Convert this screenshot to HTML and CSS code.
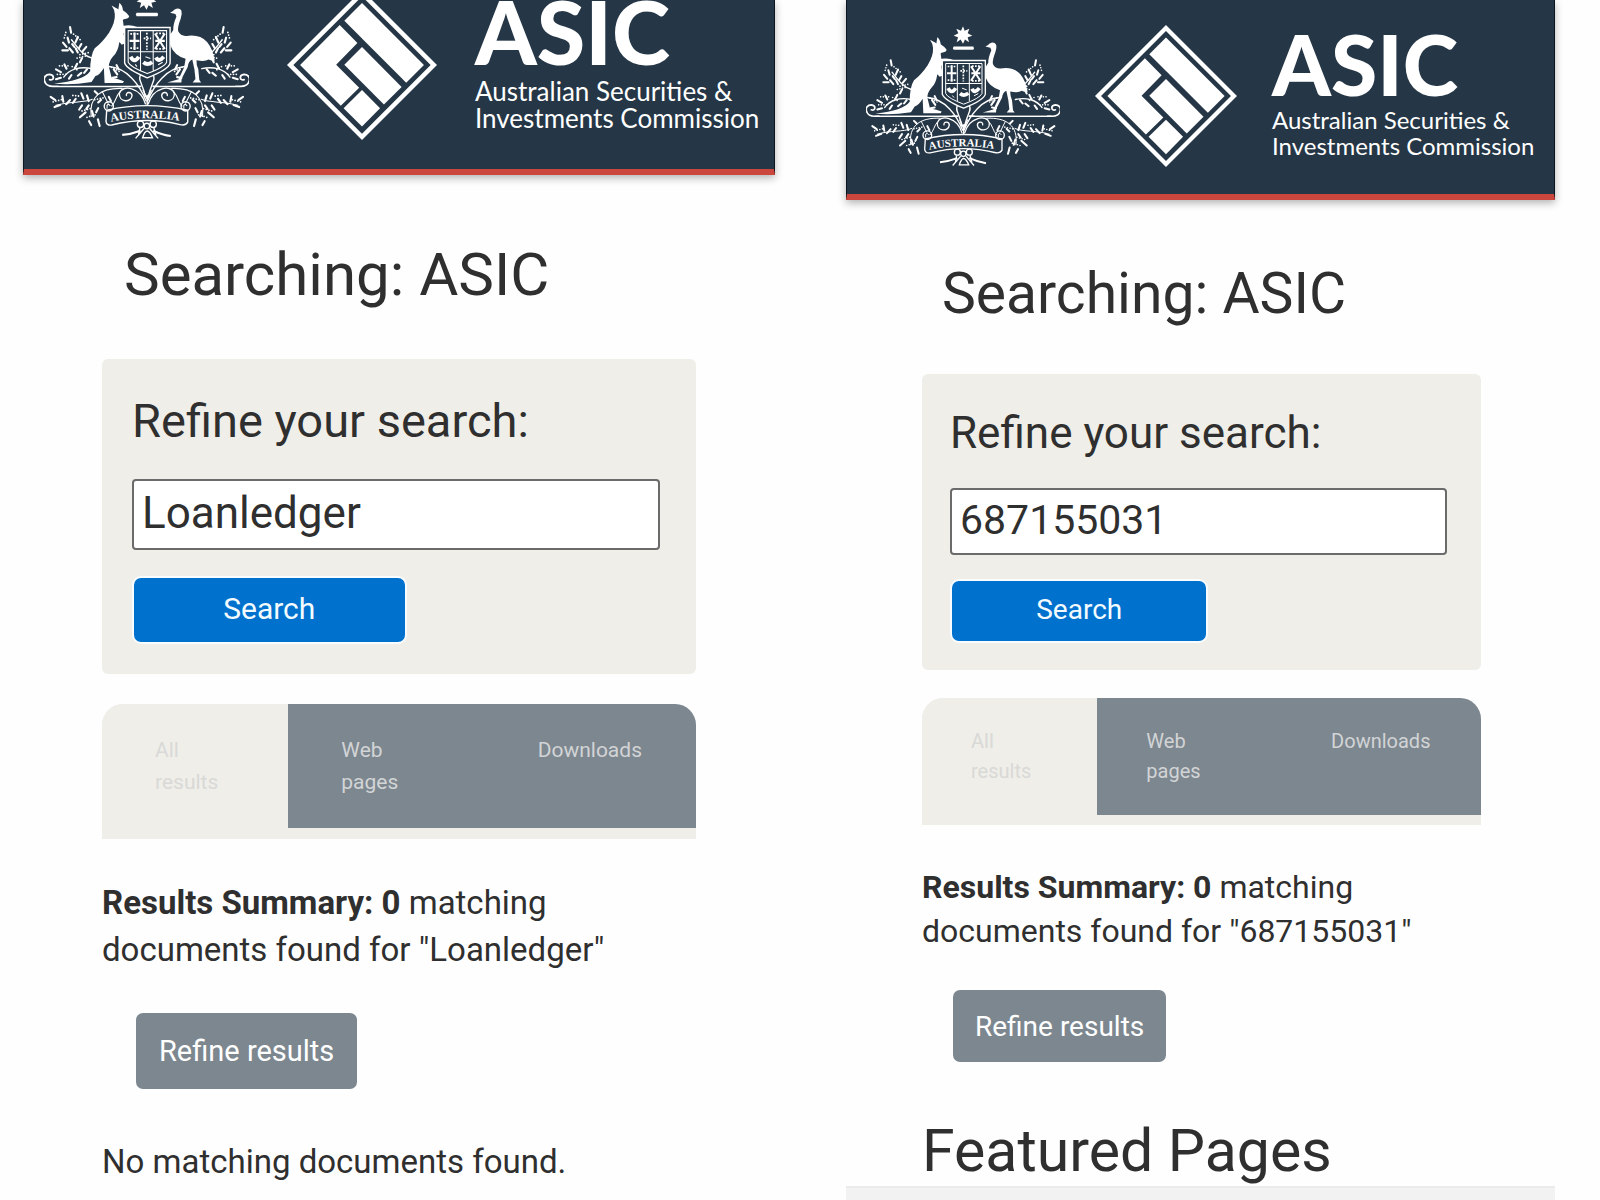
FILE: index.html
```
<!DOCTYPE html>
<html lang="en">
<head>
    <meta charset="UTF-8">
    <meta name="viewport" content="width=device-width, initial-scale=1.0">
    <title>ASIC search</title>
    <link rel="stylesheet" href="styles.css">
</head>
<body>
    <!-- shared logo artwork -->
    <svg class="defs" aria-hidden="true">
        <defs>
            <path id="ribbon-line" d="M268 449 Q370 428 478 449"/>
            <!-- one half of the foliage, mirrored for the other side -->
            <g id="foliage" fill="none" stroke="#fff" stroke-linecap="round">
                <path stroke-width="5" d="M352 348 H108 C74 352 70 314 94 314 C110 316 106 334 94 329"/>
                <path stroke-width="2" stroke="#253646" d="M335 345 H120"/>
                <path stroke-width="4" d="M368 390 C350 345 315 296 262 292 M366 376 C355 335 345 330 352 316 M214 298 C180 290 150 300 134 322 M214 268 C190 262 175 240 156 216"/>
                <path stroke-width="4" d="M366 398 C352 350 300 342 292 368 C290 394 326 396 328 374 C326 362 310 364 312 374"/>
                <path stroke-width="3" d="M300 354 C240 352 205 376 212 434 M215 385 C190 396 150 390 112 402 M292 366 C282 376 282 392 270 404 M244 364 L260 396"/>
                <path stroke-width="6" d="M152 180 L155 196 M174 208 L167 224 M145 210 L149 224 M132 224 L142 236 M130 246 L146 246 M150 240 L160 252 M184 228 L177 240 M198 236 L188 248 M168 240 L174 252 M158 228 L164 236"/>
                <path stroke-width="6" d="M112 300 L126 308 M136 286 L142 298 M112 328 L126 324 M156 316 L149 326 M172 284 L166 296 M186 268 L180 280 M184 310 L174 318 M200 300 L192 310 M276 300 L286 314 M284 288 L290 300 M272 324 L284 322"/>
                <path stroke-width="6" d="M97 378 L110 387 M130 376 L133 392 M108 407 L124 401 M152 387 L141 399 M184 368 L190 383 M168 384 L160 395 M186 402 L178 414 M200 374 L205 390 M180 436 L196 422 M205 402 L198 412 M214 418 L219 434 M231 442 L236 461 M206 447 L212 458 M232 410 L226 422 M240 386 L232 394 M222 362 L230 370 M262 378 L268 390"/>
                <path stroke-width="5" stroke-dasharray="0 8" d="M140 195 L134 216 M162 200 L186 220 M122 290 L152 290 M116 314 L144 314 M158 292 L176 304 M180 258 L206 252 M172 268 L196 262 M104 392 L128 386 M160 374 L180 376 M186 418 L214 410 M200 436 L226 428 M222 386 L250 380 M270 294 L292 306"/>
            </g>
            <symbol id="crest" viewBox="78 78 582 422">
                <use href="#foliage"/>
                <use href="#foliage" transform="translate(740) scale(-1 1)"/>
                <g fill="#fff">
                    <path d="M369 78 L374 92 L388 86 L383 99 L397 107 L383 111 L387 126 L375 118 L369 131 L362 118 L350 126 L354 111 L341 107 L355 99 L349 86 L363 92Z"/>
                    <path d="M341 139 H400 Q404 144 400 149 H341 Q336 144 341 139Z"/>
                    <path d="M270 119 L281 125 Q286 127 289 130 L292 111 Q301 118 302 132 Q311 137 320 149 Q319 156 311 156 Q303 157 302 160 L304 176 Q326 172 342 180 L339 188 L310 188 L304 198 L308 226 L299 230 L292 222 Q288 250 275 262 Q262 277 262 292 L270 324 Q290 328 305 334 L302 339 H250 L248 296 Q236 316 224 319 L213 336 Q150 346 106 340 Q190 332 209 305 Q209 260 222 240 Q245 222 263 195 Q281 166 279 143 Q279 132 270 119Z"/>
                    <path d="M436 139 Q444 136 449 130 Q462 123 468 133 Q471 142 466 156 Q456 182 459 192 Q466 206 482 205 Q520 199 541 222 Q556 240 563 275 Q552 276 545 272 Q535 279 511 274 Q510 287 516 300 L519 330 L524 337 H500 L508 327 L505 300 L499 272 Q488 276 486 293 L469 326 L468 337 H428 L460 328 L476 294 L480 270 Q447 260 437 232 L431 205 Q440 198 445 188 Q444 174 454 150 L451 143Z"/>
                </g>
                <path d="M307 181 H436 V282 Q432 300 371 324 Q313 300 307 282Z" fill="#253646" stroke="#fff" stroke-width="4"/>
                <g fill="none" stroke="#fff" stroke-width="3">
                    <path d="M317 190 H426 V280 Q420 294 371 312 Q323 294 317 280Z M352 190 V250 M388 190 V250 M317 250 H426 M352 250 V303 M388 250 V303"/>
                    <path stroke-width="6" d="M335 195 V245 M321 219 H349 M393 198 L421 242 M421 198 L393 242 M394 219 H421"/>
                    <path stroke-width="5" stroke-dasharray="5 4" d="M323 199 H348 M323 240 H348 M370 196 V244 M361 212 H382 M396 198 H421 M396 242 H421"/>
                    <path stroke-width="11" d="M324 264 Q335 284 347 264 M360 280 Q372 290 385 279 M396 266 Q403 282 418 264"/>
                    <path stroke-width="3" d="M337 286 L342 292 M366 264 L380 269 M402 287 L415 280"/>
                </g>
                <!-- ribbon -->
                <path d="M256 416 Q370 390 486 416 V450 Q480 461 464 457 Q370 433 270 458 Q255 460 254 447Z" fill="#253646" stroke="#fff" stroke-width="4"/>
                <g fill="none" stroke="#fff" stroke-width="4">
                    <circle cx="262" cy="405" r="13"/>
                    <circle cx="480" cy="405" r="13"/>
                    <path stroke-width="3" d="M257 412 V402 Q262 396 266 404 M475 412 V402 Q480 396 484 404"/>
                    <path d="M371 402 V372 M359 358 L371 385 L383 358"/>
                    <circle cx="352" cy="456" r="9"/>
                    <circle cx="388" cy="456" r="9"/>
                    <circle cx="370" cy="461" r="8"/>
                    <path d="M362 468 L338 496 M378 468 L402 496 M358 494 Q370 456 386 494Z M350 466 L346 488 M390 466 L396 488"/>
                    <path stroke-width="6" d="M352 474 Q325 484 300 486 M388 474 Q415 486 438 489"/>
                </g>
                <text class="ribbon-text"><textPath href="#ribbon-line">AUSTRALIA</textPath></text>
            </symbol>
            <symbol id="diamond" viewBox="766 77 424 424">
                <g fill="#fff">
                    <path fill-rule="evenodd" d="M978 77 L1190 289 L978 501 L766 289Z M978 95 L784 289 L978 483 L1172 289Z"/>
                    <path d="M978 114 L1153 289 L1103 339 L928 164Z"/>
                    <path d="M915 176 L965 227 L905 288 L970 353 L918 404 L803 289Z"/>
                    <path d="M978 238 L1090 351 L1040 401 L928 288Z"/>
                    <path d="M978 360 L1029 411 L978 463 L926 411Z"/>
                </g>
            </symbol>
        </defs>
    </svg>

    <div class="screens">
        <div class="screen large">
            <header class="banner">
                <svg class="crest" role="img" aria-label="Australian Government coat of arms"><use href="#crest"/></svg>
                <svg class="diamond" aria-hidden="true"><use href="#diamond"/></svg>
                <div class="brand">
                    <div class="brand-name">ASIC</div>
                    <div class="brand-sub">Australian Securities &amp;<br>Investments Commission</div>
                </div>
            </header>
            <main class="content">
                <h1 class="title">Searching: ASIC</h1>
                <form class="refine">
                    <label class="refine-label" for="q1">Refine your search:</label>
                    <input class="query" id="q1" type="text" value="Loanledger">
                    <button class="search" type="button">Search</button>
                </form>
                <nav class="tabs">
                    <a class="tab active" href="#">All results</a>
                    <a class="tab" href="#">Web pages</a>
                    <a class="tab" href="#">Downloads</a>
                </nav>
                <p class="summary"><b>Results Summary: 0</b> matching documents found for "Loanledger"</p>
                <button class="refine-results" type="button">Refine results</button>
                <p class="none">No matching documents found.</p>
            </main>
        </div>

        <div class="screen small">
            <header class="banner">
                <svg class="crest" role="img" aria-label="Australian Government coat of arms"><use href="#crest"/></svg>
                <svg class="diamond" aria-hidden="true"><use href="#diamond"/></svg>
                <div class="brand">
                    <div class="brand-name">ASIC</div>
                    <div class="brand-sub">Australian Securities &amp;<br>Investments Commission</div>
                </div>
            </header>
            <main class="content">
                <h1 class="title">Searching: ASIC</h1>
                <form class="refine">
                    <label class="refine-label" for="q2">Refine your search:</label>
                    <input class="query" id="q2" type="text" value="687155031">
                    <button class="search" type="button">Search</button>
                </form>
                <nav class="tabs">
                    <a class="tab active" href="#">All results</a>
                    <a class="tab" href="#">Web pages</a>
                    <a class="tab" href="#">Downloads</a>
                </nav>
                <p class="summary"><b>Results Summary: 0</b> matching documents found for "687155031"</p>
                <button class="refine-results" type="button">Refine results</button>
                <h2 class="featured">Featured Pages</h2>
            </main>
            <div class="bottom-bar"></div>
        </div>
    </div>
</body>
</html>
```
FILE: styles.css
```
* {
    box-sizing: border-box;
}

body {
    margin: 0;
    background: #fefefe;
    color: #2f2f2f;
    font-family: Roboto, sans-serif;
}

h1, h2, p {
    margin: 0;
    font-weight: 400;
}

.defs {
    position: absolute;
    width: 0;
    height: 0;
}

.screens {
    display: grid;
    grid-template-columns: 752fr 709fr;
    gap: 71px;
    height: 100vh;
    padding: 0 45px 0 23px;
    overflow: hidden;
}

.screen {
    display: flex;
    flex-direction: column;
    min-width: 0;
}

/* the two screens are the same page at two zoom levels */
.large {
    --title: 60px;
    --title-line: 70px;
    --heading: 47px;
    --heading-line: 54px;
    --query: 44px;
    --query-height: 71px;
    --text: 33px;
    --text-line: 47px;
    --button: 30px;
    --tab: 21px;
    --tab-line: 32px;
    --gap: 30px;
}

.small {
    --title: 57px;
    --title-line: 66px;
    --heading: 44px;
    --heading-line: 50px;
    --query: 41px;
    --query-height: 67px;
    --text: 32px;
    --text-line: 44px;
    --button: 28px;
    --tab: 20px;
    --tab-line: 30px;
    --gap: 28px;
}

/* header */
.banner {
    display: flex;
    flex: none;
    align-items: flex-end;
    gap: 38px;
    height: 175px;
    padding: 0 0 29px 20px;
    background: #253646;
    border-bottom: 6px solid #cb473d;
    border-left: 1px solid #0b1522;
    border-right: 1px solid #0b1522;
    box-shadow: 0 3px 8px rgba(0, 0, 0, .3);
    color: #fff;
    font-family: Lato, sans-serif;
}

.small .banner {
    gap: 35px;
    height: 200px;
    padding: 0 0 27px 19px;
}

.crest { flex: none; width: 205px; height: 149px; }
.diamond { flex: none; width: 150px; height: 150px; }
.small .crest { width: 194px; height: 141px; }
.small .diamond { width: 142px; height: 142px; }

.ribbon-text {
    fill: #fff;
    font: bold 33px "Liberation Serif", serif;
}

.brand { white-space: nowrap; }

.brand-name {
    margin-bottom: 17px;
    font-size: 88px;
    font-weight: 900;
    line-height: 60px;
}

.brand-sub {
    padding-bottom: 8px;
    font-size: 26px;
    line-height: 27px;
}

.small .brand-name {
    margin-bottom: 15px;
    font-size: 84px;
    line-height: 56px;
}

.small .brand-sub {
    font-size: 24px;
    line-height: 26px;
}

/* page */
.content {
    padding: 65px 79px 0;
}

.title {
    padding-left: 22px;
    font-size: var(--title);
    line-height: var(--title-line);
}

.refine {
    margin: 49px 0 var(--gap);
    padding: 35px 36px 30px 30px;
    background: #efeee9;
    border-radius: 6px;
}

.refine-label {
    display: block;
    margin-bottom: 31px;
    font-size: var(--heading);
    line-height: var(--heading-line);
}

.query {
    display: block;
    width: 100%;
    height: var(--query-height);
    margin-bottom: 26px;
    padding: 0 8px 3px;
    background: #fff;
    border: 2px solid #6b6b6b;
    border-radius: 4px;
    color: inherit;
    font: var(--query) Roboto, sans-serif;
}

.search {
    display: block;
    width: 52%;
    height: 68px;
    padding: 0 0 4px;
    background: #0072ce;
    border: 2px solid #fafdff;
    border-radius: 9px;
    color: #f4fbff;
    font: var(--button) Roboto, sans-serif;
}

.tabs {
    display: grid;
    grid-template-columns: 186fr 196fr 211fr;
    background: #efeee9;
    border-bottom: 11px solid #efeee9;
    border-radius: 21px 21px 0 0;
    overflow: hidden;
}

.tab {
    padding: 30px 0 30px 53px;
    background: #7d878f;
    color: #d2d4d6;
    font-size: var(--tab);
    line-height: var(--tab-line);
    text-decoration: none;
}

.tab:not(:last-child) { padding-right: 53px; }

.tab.active {
    background: #efeee9;
    color: #d9d9d7;
}

.summary {
    margin: 40px 0;
    font-size: var(--text);
    line-height: var(--text-line);
}

.refine-results {
    display: block;
    height: 76px;
    margin-left: 34px;
    padding: 0 23px;
    background: #7d878f;
    border: 0;
    border-radius: 7px;
    color: #fff;
    font: 29px Roboto, sans-serif;
}

.none {
    margin-top: 49px;
    font-size: var(--text);
    line-height: var(--text-line);
}

.small .content { padding: 61px 74px 0 76px; }
.small .title { padding-left: 20px; }
.small .refine { margin-top: 47px; padding: 34px 34px 27px 28px; }
.small .refine-label { margin-bottom: 30px; }
.small .query { margin-bottom: 24px; }
.small .search { height: 64px; }
.small .tabs { border-bottom-width: 10px; }
.small .tab { padding: 28px 0 29px 49px; }
.small .tab:not(:last-child) { padding-right: 49px; }
.small .summary { margin-bottom: 37px; }
.small .refine-results { height: 72px; margin-left: 31px; padding: 0 22px; font-size: 28px; }

.featured {
    margin: 56px 0 2px;
    font-size: 59px;
    line-height: var(--title-line);
}

.bottom-bar {
    flex: 1;
    min-height: 13px;
    background: #f2f2f2;
    border-top: 2px solid #ebebeb;
}
```
